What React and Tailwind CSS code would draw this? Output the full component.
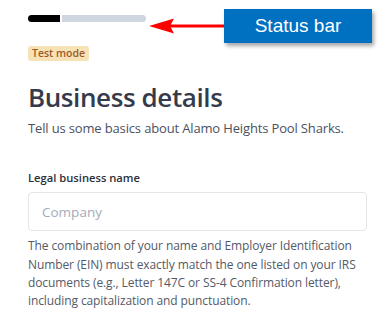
import React from 'react';

const font = { fontFamily: '"Open Sans", "Noto Sans", sans-serif' };

const StatusCallout = () => (
  <div className="absolute left-[149px] top-[9px] flex items-center">
    {/* Arrow */}
    <svg width="75" height="16" viewBox="0 0 75 16" className="block">
      <polygon points="0,8 25,0.5 21,8 25,15.5" fill="#ff0000" />
      <rect x="20" y="6.5" width="55" height="3" fill="#ff0000" />
    </svg>
    <div className="flex h-[34px] w-[148px] items-center justify-center bg-[#0070c0] text-[19px] text-white shadow-[2px_3px_4px_rgba(0,0,0,0.35)] [font-family:'Liberation_Sans',Arial,sans-serif]">
      Status bar
    </div>
  </div>
);

export default function App() {
  return (
    <div className="relative h-[322px] w-[385px] overflow-hidden bg-white" style={font}>
      <StatusCallout />
      <div className="px-[28px] pt-[15px]">
        {/* Progress */}
        <div className="flex h-[7px] w-[118px] gap-[2px]">
          <div className="h-full w-[32px] rounded-l-full bg-black" />
          <div className="h-full flex-1 rounded-r-full bg-[#cfd6df]" />
        </div>

        <div className="mt-[24px] inline-flex h-[15px] items-center rounded-[3px] bg-[#f7e2b5] px-[4px] text-[10.5px] font-semibold leading-none text-[#9c5a2b]">
          Test mode
        </div>

        <h1 className="mt-[18px] text-[26px] font-semibold leading-[32px] tracking-[-0.4px] text-[#363b4b]">
          Business details
        </h1>
        <p className="mt-[6px] whitespace-nowrap text-[13px] leading-[18px] tracking-[-0.15px] text-[#4b5161]">
          Tell us some basics about Alamo Heights Pool Sharks.
        </p>

        <label className="mt-[33px] block text-[11.2px] font-semibold leading-[16px] text-[#2a2f3a]">
          Legal business name
        </label>
        <div className="mt-[6px] flex h-[39px] w-[339px] items-center rounded-[4px] border border-[#e3e6ea] px-[13px] text-[13.5px] text-[#a4acb8]">
          Company
        </div>
        <p className="mt-[6px] w-[340px] text-[12px] leading-[18.3px] tracking-[-0.1px] text-[#545a66]">
          The combination of your name and Employer Identification Number (EIN) must exactly match the one listed on your IRS documents (e.g., Letter 147C or SS-4 Confirmation letter), including capitalization and punctuation.
        </p>
      </div>
    </div>
  );
}
